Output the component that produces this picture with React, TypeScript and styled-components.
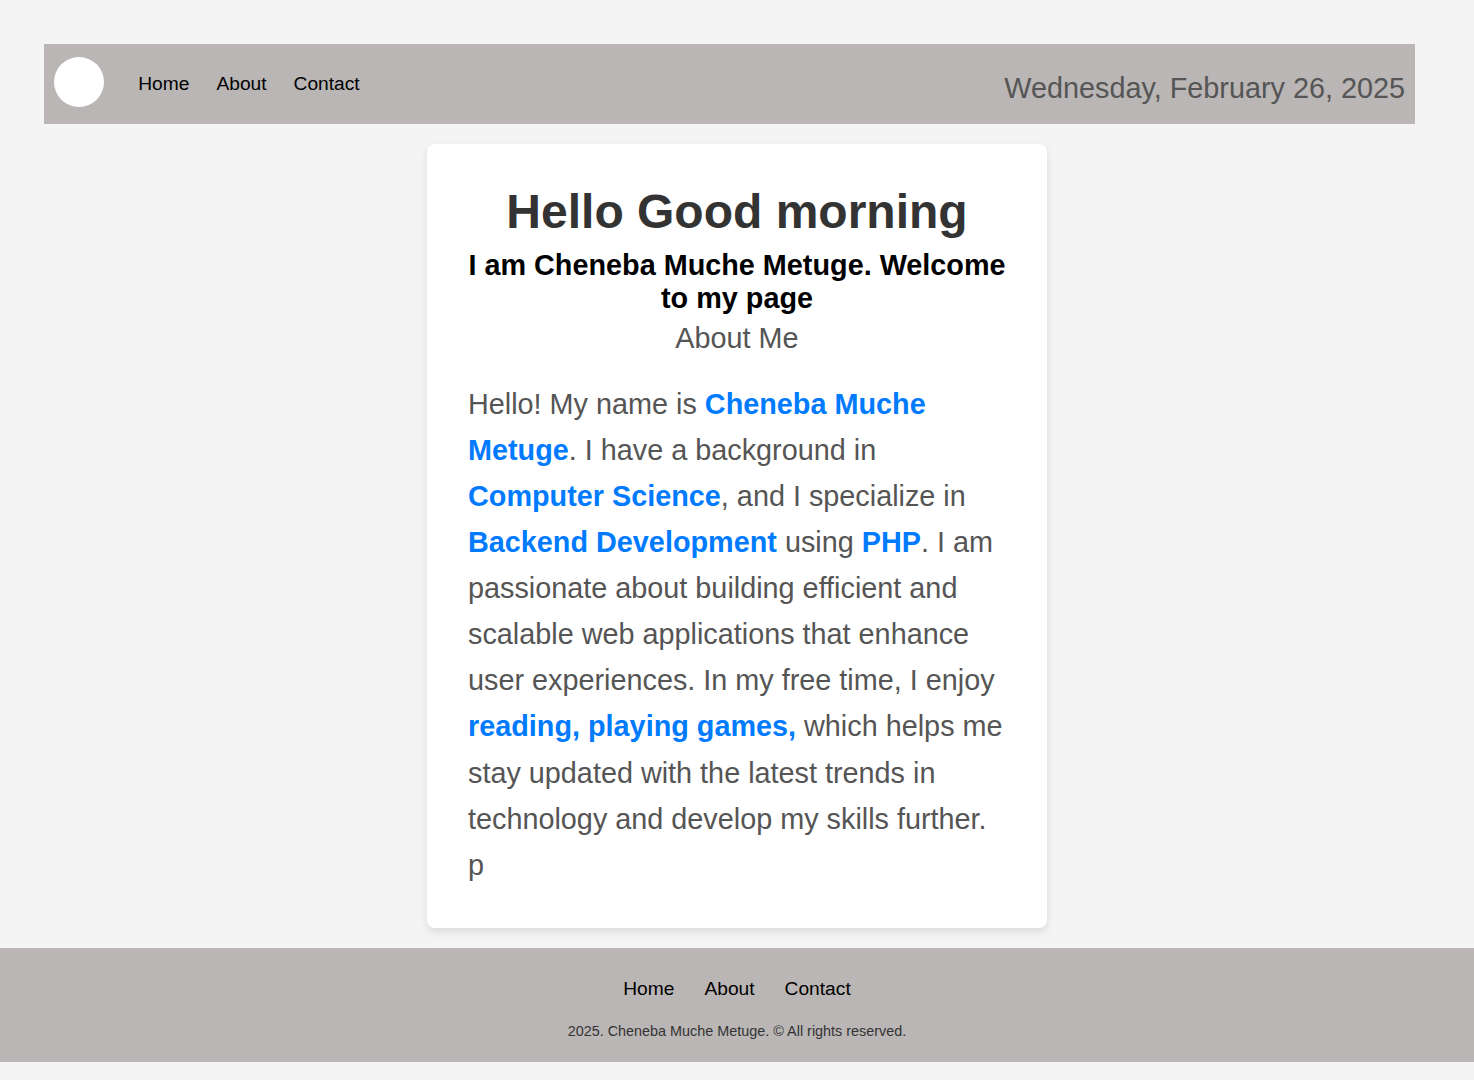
import React from "react";
import styled, { createGlobalStyle } from "styled-components";

const GlobalStyle = createGlobalStyle`
  html, body {
    margin: 0;
    padding: 0;
    background: #f4f4f4;
    font-family: "Liberation Sans", Arial, sans-serif;
  }
`;

const Page = styled.div`
  display: flex;
  flex-direction: column;
  padding-top: 44px;
  padding-bottom: 18px;
`;

const Header = styled.header`
  display: flex;
  align-items: center;
  justify-content: space-between;
  box-sizing: border-box;
  width: 93%;
  margin-left: 3%;
  height: 80px;
  padding: 0 10px;
  background: #bab6b5;
`;

const Brand = styled.div`
  display: flex;
  align-items: center;
  gap: 34px;
`;

const Logo = styled.div`
  width: 50px;
  height: 50px;
  margin-bottom: 4px;
  border-radius: 50%;
  background: #ffffff;
`;

const NavList = styled.nav<{ $gap: number }>`
  display: flex;
  align-items: center;
  gap: ${(p) => p.$gap}px;
`;

const NavLink = styled.a`
  font-size: 19.2px;
  color: #000;
  text-decoration: none;
`;

const DateText = styled.div`
  font-size: 28.8px;
  color: #555;
  margin-top: 8px;
`;

const Card = styled.main`
  box-sizing: border-box;
  width: 620px;
  margin: 20px auto;
  padding: 40px;
  background: #ffffff;
  border-radius: 8px;
  box-shadow: 0 4px 8px rgba(0, 0, 0, 0.1);
`;

const Title = styled.h1`
  margin: 0 0 10px;
  text-align: center;
  font-size: 48px;
  font-weight: 700;
  color: #333;
`;

const Subtitle = styled.h2`
  margin: 0;
  text-align: center;
  font-size: 28.8px;
  font-weight: 700;
  color: #000;
`;

const SectionTitle = styled.h3`
  margin: 7px 0 0;
  text-align: center;
  font-size: 28.8px;
  font-weight: 400;
  color: #555;
`;

const Bio = styled.p`
  margin: 26px 0 0 1px;
  font-size: 28.8px;
  line-height: 1.6;
  color: #555;
`;

const Em = styled.strong`
  color: #007bff;
  font-weight: 700;
`;

const Footer = styled.footer`
  display: flex;
  flex-direction: column;
  align-items: center;
  padding: 30px 0 23px;
  background: #bab6b5;
`;

const Copyright = styled.p`
  margin: 23px 0 0;
  font-size: 14.4px;
  color: #333;
`;

export default function App() {
  return (
    <>
      <GlobalStyle />
      <Page>
        <Header>
          <Brand>
            <Logo />
            <NavList $gap={27}>
              <NavLink href="#">Home</NavLink>
              <NavLink href="#">About</NavLink>
              <NavLink href="#">Contact</NavLink>
            </NavList>
          </Brand>
          <DateText>Wednesday, February 26, 2025</DateText>
        </Header>
        <Card>
          <Title>Hello Good morning</Title>
          <Subtitle>I am Cheneba Muche Metuge. Welcome to my page</Subtitle>
          <SectionTitle>About Me</SectionTitle>
          <Bio>
            Hello! My name is <Em>Cheneba Muche Metuge</Em>. I have a background in{" "}
            <Em>Computer Science</Em>, and I specialize in <Em>Backend Development</Em> using{" "}
            <Em>PHP</Em>. I am passionate about building efficient and scalable web applications
            that enhance user experiences. In my free time, I enjoy{" "}
            <Em>reading, playing games,</Em> which helps me stay updated with the latest trends in
            technology and develop my skills further. p
          </Bio>
        </Card>
        <Footer>
          <NavList $gap={30}>
            <NavLink href="#">Home</NavLink>
            <NavLink href="#">About</NavLink>
            <NavLink href="#">Contact</NavLink>
          </NavList>
          <Copyright>2025. Cheneba Muche Metuge. © All rights reserved.</Copyright>
        </Footer>
      </Page>
    </>
  );
}
